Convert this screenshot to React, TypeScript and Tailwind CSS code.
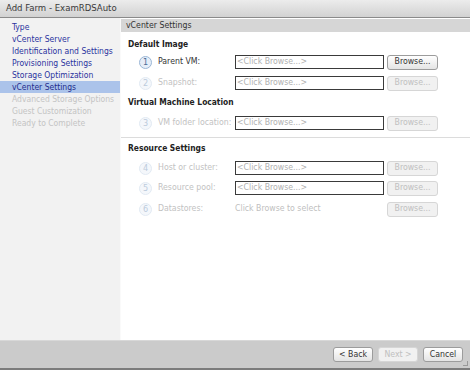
import React from "react";

const font = { fontFamily: '"DejaVu Sans Condensed", "DejaVu Sans", sans-serif' };

function Num({ n, active }: { n: number; active?: boolean }) {
  return (
    <div
      className={
        "w-[13px] h-[13px] rounded-full flex items-center justify-center text-[9px] leading-none " +
        (active
          ? "border border-[#9ab6d6] bg-[#e6eef8] text-[#4d6d96]"
          : "border border-[#e2eaf3] bg-[#f4f7fb] text-[#bccbdb]")
      }
    >
      {n}
    </div>
  );
}

function Btn({ label, disabled, w = "w-[51px]" }: { label: string; disabled?: boolean; w?: string }) {
  return (
    <div
      className={
        w +
        " h-[15px] rounded-[3px] flex items-center justify-center text-[8.7px] " +
        (disabled
          ? "border border-[#d6d6d6] bg-[#f1f1f1] text-[#c0c0c0]"
          : "border border-[#9c9c9c] bg-gradient-to-b from-[#ffffff] to-[#e4e4e4] text-[#333]")
      }
    >
      {label}
    </div>
  );
}

function Row({
  n,
  label,
  active,
  value,
  btnDisabled,
  mt,
}: {
  n: number;
  label: string;
  active?: boolean;
  value?: string;
  btnDisabled?: boolean;
  mt: string;
}) {
  return (
    <div className={"flex items-center h-[16px] " + mt}>
      <div className="w-[11px]" />
      <Num n={n} active={active} />
      <div
        className={
          "w-[83px] pl-[6px] text-[8.7px] whitespace-nowrap " + (active ? "text-[#333]" : "text-[#c2c2c2]")
        }
      >
        {label}
      </div>
      {value === undefined ? (
        <div className="w-[149px] h-[14px] border border-[#3a3a3a] bg-white flex items-center pl-[1px] text-[8.7px] text-[#b0b0b0]">
          &lt;Click Browse...&gt;
        </div>
      ) : (
        <div className="w-[149px] h-[14px] flex items-center text-[8.7px] text-[#c0c0c0]">{value}</div>
      )}
      <div className="ml-[3px]">
        <Btn label="Browse..." disabled={btnDisabled} />
      </div>
    </div>
  );
}

export default function App() {
  const items: { t: string; s: "link" | "sel" | "dis" }[] = [
    { t: "Type", s: "link" },
    { t: "vCenter Server", s: "link" },
    { t: "Identification and Settings", s: "link" },
    { t: "Provisioning Settings", s: "link" },
    { t: "Storage Optimization", s: "link" },
    { t: "vCenter Settings", s: "sel" },
    { t: "Advanced Storage Options", s: "dis" },
    { t: "Guest Customization", s: "dis" },
    { t: "Ready to Complete", s: "dis" },
  ];
  return (
    <div className="w-[470px] h-[370px] flex flex-col bg-white overflow-hidden" style={font}>
      {/* title bar */}
      <div className="h-[18px] flex items-center pl-[6px] bg-gradient-to-b from-[#ececec] to-[#d2d2d2] border-b border-[#8a8a8a] text-[9.5px] text-[#3a3a3a]">
        Add Farm - ExamRDSAuto
      </div>
      <div className="flex flex-1">
        {/* sidebar */}
        <div className="w-[121px] bg-[#f2f2f2] pt-[3px] border-r border-[#fafafa]">
          {items.map((it) => (
            <div
              key={it.t}
              className={
                "h-[12px] flex items-center pl-[12px] text-[8.5px] whitespace-nowrap " +
                (it.s === "sel"
                  ? "bg-[#abc3ea] text-[#1f2c8c]"
                  : it.s === "link"
                  ? "text-[#2a339e]"
                  : "text-[#c4c4c4]")
              }
            >
              {it.t}
            </div>
          ))}
        </div>
        {/* content */}
        <div className="flex-1 flex flex-col bg-white">
          <div className="h-[13px] mt-px bg-[#d6d6d6] flex items-center pl-[5px] text-[8.7px] text-[#333]">
            vCenter Settings
          </div>
          <div className="pl-[7px]">
            <div className="h-[12px] mt-[6px] flex items-center font-bold text-[8.4px] text-[#222]">Default Image</div>
            <Row n={1} label="Parent VM:" active mt="mt-[4px]" />
            <Row n={2} label="Snapshot:" btnDisabled mt="mt-[5px]" />
            <div className="h-[12px] mt-[5px] flex items-center font-bold text-[8.4px] text-[#222]">
              Virtual Machine Location
            </div>
            <Row n={3} label="VM folder location:" btnDisabled mt="mt-[7px]" />
          </div>
          <div className="h-px bg-[#dcdcdc] mt-[6px]" />
          <div className="pl-[7px]">
            <div className="h-[12px] mt-[4px] flex items-center font-bold text-[8.4px] text-[#222]">Resource Settings</div>
            <Row n={4} label="Host or cluster:" btnDisabled mt="mt-[6px]" />
            <Row n={5} label="Resource pool:" btnDisabled mt="mt-[4px]" />
            <Row n={6} label="Datastores:" btnDisabled value="Click Browse to select" mt="mt-[5px]" />
          </div>
        </div>
      </div>
      {/* bottom bar */}
      <div className="h-[30px] bg-[#cbcbcb] border-t border-[#d8d8d8] border-b-2 border-b-[#7c7c7c] flex items-center justify-end pr-[7px] gap-[5px] relative">
        <Btn label="< Back" w="w-[40px]" />
        <Btn label="Next >" w="w-[40px]" disabled />
        <Btn label="Cancel" w="w-[40px]" />
        <div className="absolute right-[2px] bottom-[2px] w-[5px] h-[5px] border-r border-b border-[#999]" />
      </div>
    </div>
  );
}
